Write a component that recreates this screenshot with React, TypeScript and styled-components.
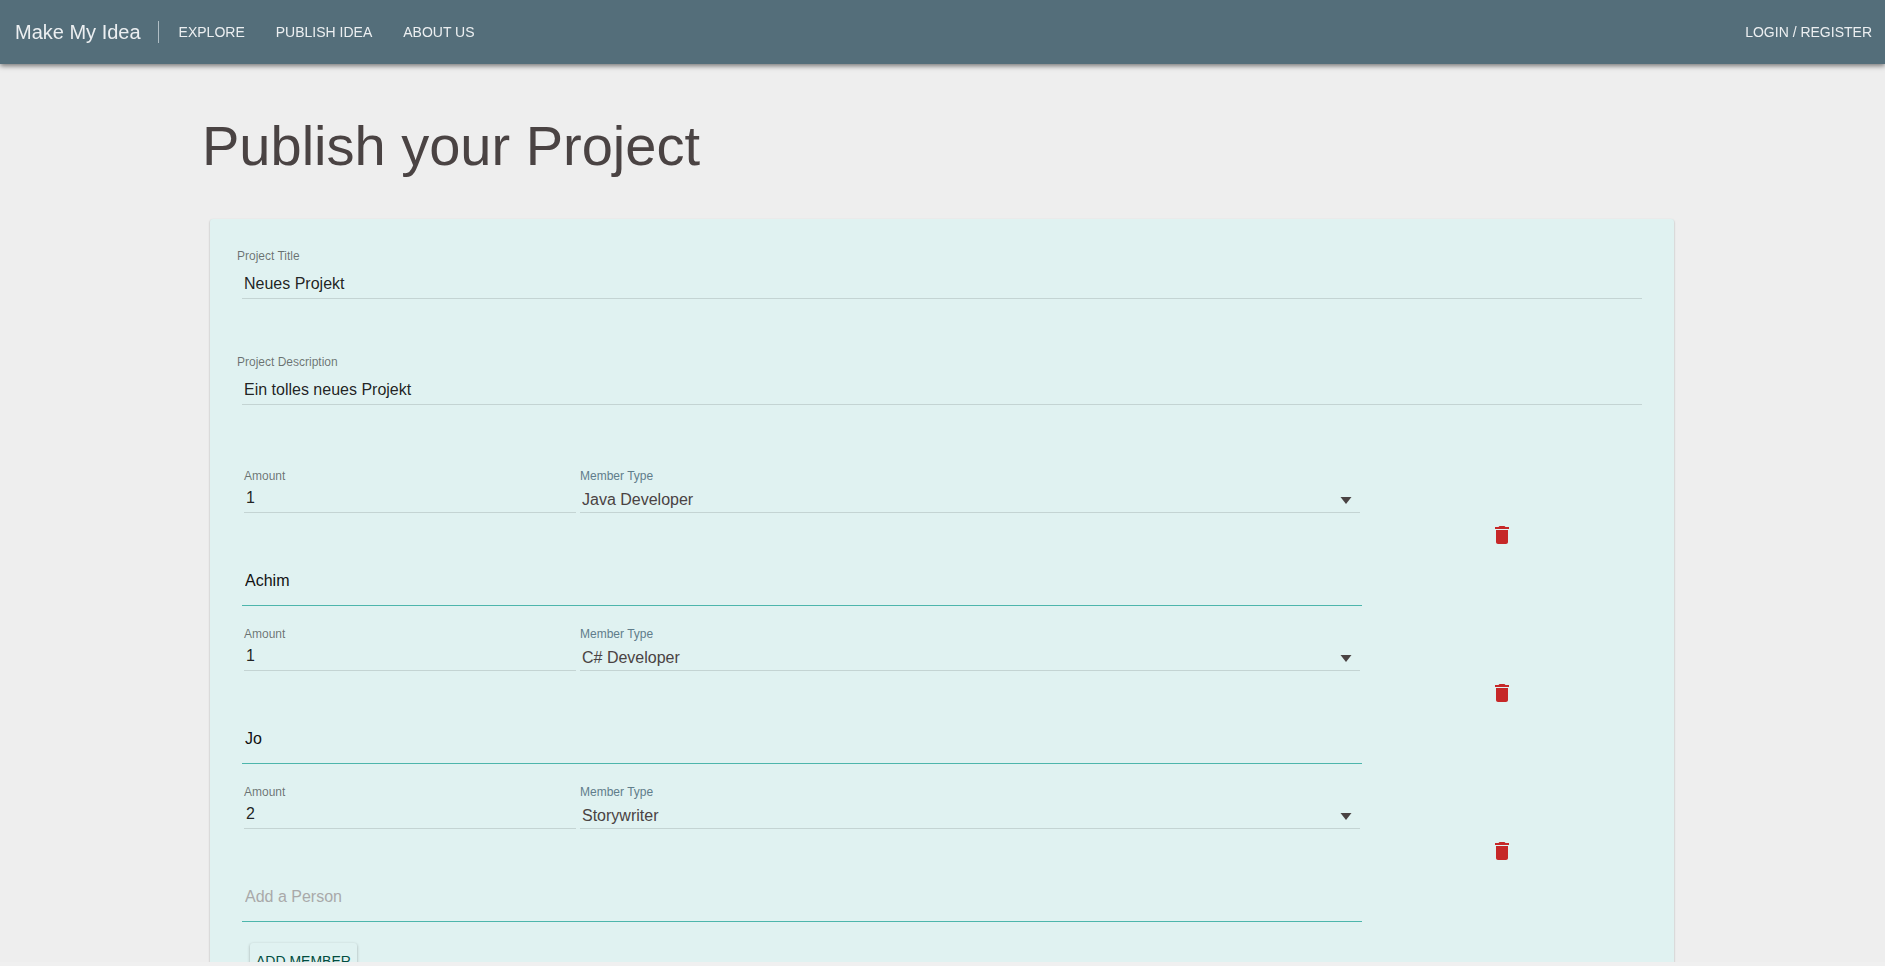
import React, { useState } from "react";
import styled, { createGlobalStyle } from "styled-components";

const GlobalStyle = createGlobalStyle`
  *, *::before, *::after { box-sizing: border-box; }
  body {
    margin: 0;
    background: #f0f0f0;
    color: rgba(0, 0, 0, 0.87);
    font-family: "Liberation Sans", Arial, sans-serif;
    font-size: 16px;
  }
  input, select, button { font-family: inherit; }
`;

const Page = styled.div`
  display: flex;
  flex-direction: column;
  height: 100vh;
  padding-bottom: 4px;
`;

const Toolbar = styled.header`
  position: relative;
  z-index: 1;
  display: flex;
  flex: none;
  align-items: center;
  height: 64px;
  padding: 0 13px 0 15px;
  background: #546e7a;
  color: #eceff1;
  box-shadow: 0 2px 5px 0 rgba(0, 0, 0, 0.5);
`;

const Brand = styled.a`
  padding-right: 17px;
  color: inherit;
  font-size: 20px;
  line-height: 22px;
  text-decoration: none;
  border-right: 1px solid #b0bec5;
`;

const Nav = styled.nav`
  display: flex;
  flex: 1;
  gap: 31px;
  padding-left: 20px;
`;

const NavLink = styled.a`
  color: inherit;
  font-size: 14px;
  line-height: 20px;
  text-decoration: none;
  text-transform: uppercase;
`;

const Content = styled.main`
  flex: 1;
  min-height: 0;
  overflow-y: auto;
  scrollbar-width: none;
  padding: 54px 203px 0 202px;
  background: #eeeeee;
`;

const PageTitle = styled.h1`
  margin: 0 0 45px;
  color: #4a4343;
  font-size: 56px;
  font-weight: 400;
  line-height: 56px;
`;

const Card = styled.form`
  margin: 0 8px 8px;
  padding: 29px 32px 32px;
  background: #e0f2f1;
  border-radius: 3px;
  box-shadow: 0 1px 2px 0 rgba(0, 0, 0, 0.32);
`;

const ProjectFields = styled.div`
  display: grid;
  gap: 55px;
`;

const Field = styled.div`
  display: flex;
  flex-direction: column;
  min-width: 0;
`;

const Label = styled.label<{ $accent?: boolean; $outdent?: boolean }>`
  margin-left: ${(p) => (p.$outdent ? "-5px" : "0")};
  color: ${(p) => (p.$accent ? "#607d8b" : "rgba(0, 0, 0, 0.54)")};
  font-size: 12px;
  line-height: 16px;
`;

const TextInput = styled.input<{ $spaced?: boolean }>`
  width: 100%;
  height: 30px;
  margin-top: ${(p) => (p.$spaced ? "5px" : "-1px")};
  padding: 0 2px;
  color: rgba(0, 0, 0, 0.87);
  font-size: 16px;
  background: none;
  border: 0;
  border-bottom: 1px solid rgba(0, 0, 0, 0.12);
  border-radius: 0;
  outline: none;
`;

const MemberList = styled.ul`
  margin: 43px 0 0;
  padding: 0;
  list-style: none;
`;

const MemberRow = styled.li`
  display: grid;
  grid-template-columns: 4fr 1fr;
  padding-top: 20px;
`;

const RoleRow = styled.div`
  display: grid;
  grid-template-columns: 3fr 7fr;

  & > ${Field} {
    margin: 0 2px;
  }
`;

const SelectWrap = styled.div`
  position: relative;
`;

const Select = styled.select`
  display: block;
  width: 100%;
  height: 29px;
  padding: 3px 28px 0 2px;
  color: #4a4343;
  font-size: 16px;
  appearance: none;
  background: none;
  border: 0;
  border-bottom: 1px solid rgba(0, 0, 0, 0.12);
  border-radius: 0;
  outline: none;
`;

const Arrow = styled.svg`
  position: absolute;
  top: 13px;
  right: 8px;
  width: 12px;
  height: 7px;
  fill: #4a4343;
  pointer-events: none;
`;

const PersonBox = styled.div`
  margin-top: 52px;
  padding-bottom: 8px;
  border-bottom: 1px solid #4db6ac;
`;

const PersonInput = styled.input`
  display: block;
  width: 100%;
  height: 32px;
  padding: 0 3px;
  color: #111111;
  font-size: 16px;
  background: none;
  border: 0;
  outline: none;

  &::placeholder {
    color: #a9a9a9;
    opacity: 1;
  }
`;

const DeleteButton = styled.button`
  justify-self: center;
  display: grid;
  place-items: center;
  width: 40px;
  height: 40px;
  margin-top: 47px;
  padding: 0;
  background: none;
  border: 0;
  border-radius: 50%;
  cursor: pointer;
`;

const TrashIcon = styled.svg`
  width: 24px;
  height: 24px;
  fill: #c62828;
`;

const AddButton = styled.button`
  height: 36px;
  margin: 21px 8px 6px;
  padding: 0 6px;
  color: #004d40;
  font-size: 14px;
  text-transform: uppercase;
  background: #e0f2f1;
  border: 0;
  border-radius: 3px;
  box-shadow: 0 1px 3px 0 rgba(0, 0, 0, 0.3);
  cursor: pointer;
`;

const ROLES = ["Java Developer", "C# Developer", "Storywriter"];

interface Member {
  id: number;
  amount: string;
  role: string;
  person: string;
}

const INITIAL_MEMBERS: Member[] = [
  { id: 1, amount: "1", role: "Java Developer", person: "Achim" },
  { id: 2, amount: "1", role: "C# Developer", person: "Jo" },
  { id: 3, amount: "2", role: "Storywriter", person: "" },
];

interface MemberEditorProps {
  member: Member;
  onRemove: () => void;
}

function MemberEditor({ member, onRemove }: MemberEditorProps) {
  const amountId = `amount-${member.id}`;
  const roleId = `role-${member.id}`;
  return (
    <MemberRow>
      <div>
        <RoleRow>
          <Field>
            <Label htmlFor={amountId}>Amount</Label>
            <TextInput id={amountId} inputMode="numeric" defaultValue={member.amount} />
          </Field>
          <Field>
            <Label htmlFor={roleId} $accent>
              Member Type
            </Label>
            <SelectWrap>
              <Select id={roleId} defaultValue={member.role}>
                {ROLES.map((role) => (
                  <option key={role}>{role}</option>
                ))}
              </Select>
              <Arrow viewBox="0 0 12 7" aria-hidden="true">
                <path d="M0.5 0h11L6 7z" />
              </Arrow>
            </SelectWrap>
          </Field>
        </RoleRow>
        <PersonBox>
          <PersonInput
            aria-label="Person"
            placeholder="Add a Person"
            defaultValue={member.person}
          />
        </PersonBox>
      </div>
      <DeleteButton type="button" aria-label="Remove member" onClick={onRemove}>
        <TrashIcon viewBox="0 0 24 24" aria-hidden="true">
          <path d="M6 19c0 1.1.9 2 2 2h8c1.100 0 2-.9 2-2V7H6v12zM19 4h-3.500l-1-1h-5l-1 1H5v2h14V4z" />
        </TrashIcon>
      </DeleteButton>
    </MemberRow>
  );
}

export default function App() {
  const [members, setMembers] = useState(INITIAL_MEMBERS);

  const removeMember = (id: number) =>
    setMembers((list) => list.filter((m) => m.id !== id));

  const addMember = () =>
    setMembers((list) => [
      ...list,
      {
        id: Math.max(0, ...list.map((m) => m.id)) + 1,
        amount: "1",
        role: ROLES[0],
        person: "",
      },
    ]);

  return (
    <>
      <GlobalStyle />
      <Page>
        <Toolbar>
          <Brand href="#">Make My Idea</Brand>
          <Nav>
            <NavLink href="#explore">Explore</NavLink>
            <NavLink href="#publish">Publish Idea</NavLink>
            <NavLink href="#about">About us</NavLink>
          </Nav>
          <NavLink href="#login">Login / Register</NavLink>
        </Toolbar>
        <Content>
          <PageTitle>Publish your Project</PageTitle>
          <Card onSubmit={(e) => e.preventDefault()}>
            <ProjectFields>
              <Field>
                <Label htmlFor="title" $outdent>
                  Project Title
                </Label>
                <TextInput id="title" $spaced defaultValue="Neues Projekt" />
              </Field>
              <Field>
                <Label htmlFor="description" $outdent>
                  Project Description
                </Label>
                <TextInput
                  id="description"
                  $spaced
                  defaultValue="Ein tolles neues Projekt"
                />
              </Field>
            </ProjectFields>
            <MemberList>
              {members.map((member) => (
                <MemberEditor
                  key={member.id}
                  member={member}
                  onRemove={() => removeMember(member.id)}
                />
              ))}
            </MemberList>
            <AddButton type="button" onClick={addMember}>
              Add Member
            </AddButton>
          </Card>
        </Content>
      </Page>
    </>
  );
}
